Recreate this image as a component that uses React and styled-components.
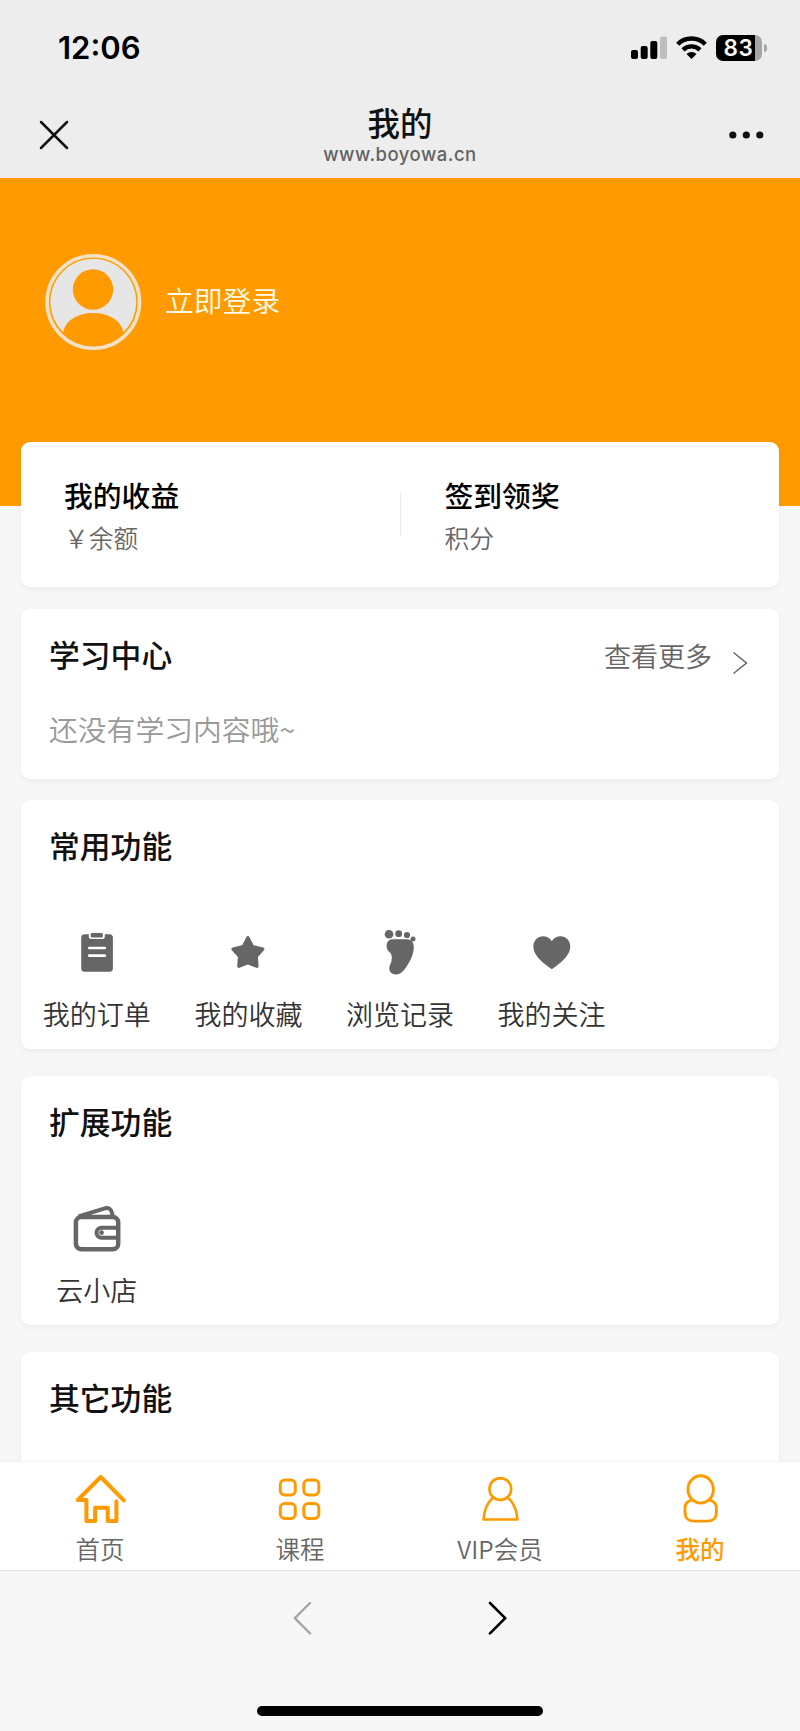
import React from 'react';
import styled, { createGlobalStyle } from 'styled-components';

const GlobalStyle = createGlobalStyle`
* {
  box-sizing: border-box;
}

body {
  margin: 0;
  background: #f7f7f7;
  font-family: "Noto Sans CJK SC", sans-serif;
}
`

const Phone = styled.div`
display: flex;
flex-direction: column;
width: 800px;
height: 1731px;
overflow: hidden;
background: #f7f7f7;
`

const StatusBar = styled.div`
display: flex;
justify-content: space-between;
height: 96px;
padding: 35px 33px 0 58px;
background: #ededed;
`

const Time = styled.span`
font-family: Inter, sans-serif;
font-size: 31px;
font-weight: 600;
line-height: 26px;
color: #000;
`

const StatusIcons = styled.div`
display: flex;
align-items: flex-start;
gap: 9px;
height: 26px;
`

const Battery = styled.div`
display: flex;
align-items: center;
gap: 2px;
`

const BatteryBody = styled.div`
width: 46px;
height: 26px;
border-radius: 7px;
padding-left: 7.5px;
background: linear-gradient(to right, #000 39px, #a5a5a5 39px);
font-family: Inter, sans-serif;
font-size: 22.5px;
font-weight: 600;
letter-spacing: 0.5px;
line-height: 26px;
color: #fff;
`

const BatteryTip = styled.div`
width: 3px;
height: 8px;
border-radius: 0 4px 4px 0;
background: #a5a5a5;
`

const NavBar = styled.header`
display: grid;
grid-template-columns: 200px 1fr 200px;
height: 82px;
background: #ededed;
`

const NavSide = styled.div`
display: flex;
justify-content: ${props => props.$right ? 'flex-end' : 'flex-start'};
padding: 24px 36px 0 39px;
`

const NavTitle = styled.div`
display: flex;
flex-direction: column;
align-items: center;

h1 {
  margin: 8px 0 0;
  font-size: 32.4px;
  font-weight: 500;
  line-height: 36px;
  color: #111;
}

p {
  margin: 2px 0 0;
  font-family: Inter, sans-serif;
  font-size: 18.5px;
  font-weight: 500;
  line-height: 24px;
  letter-spacing: 0.5px;
  color: #636363;
}
`

const Content = styled.main`
flex: 1;
min-height: 0;
overflow: hidden;
`

const Banner = styled.section`
display: flex;
height: 328px;
padding: 76px 45px 0;
background: #ff9b00;
`

const Login = styled.span`
margin-left: 23px;
font-size: 28.8px;
line-height: 92px;
font-weight: 350;
color: #fffbe8;
`

const Cards = styled.div`
display: flex;
flex-direction: column;
margin-top: -64px;
padding: 0 21px;
`

const Card = styled.section`
height: ${props => props.$height}px;
margin-bottom: ${props => props.$gap}px;
border-radius: 9px;
background: #fff;
box-shadow: 0 2px 6px rgba(0, 0, 0, 0.05);
`

const StatCard = styled(Card)`
position: relative;
display: grid;
grid-template-columns: 1fr 1px 1fr;
`

const Stat = styled.div`
padding: 33px 0 0 ${props => props.$left}px;

h3 {
  margin: 0;
  font-size: 28.8px;
  font-weight: 500;
  line-height: 40px;
  color: #000;
}

p {
  margin: 4px 0 0;
  font-size: 24.7px;
  font-weight: 350;
  line-height: 36px;
  color: #666;
}
`

const Divider = styled.div`
height: 43px;
margin-top: 51px;
background: #ececec;
`

const CardHead = styled.div`
display: flex;
justify-content: space-between;
padding: 0 31px 0 28px;

h2 {
  margin: 25px 0 0;
  font-size: 30.8px;
  font-weight: 500;
  line-height: 40px;
  color: #111;
}
`

const More = styled.div`
display: flex;
gap: 20px;
padding-top: 27px;
font-size: 27px;
font-weight: 350;
line-height: 40px;
color: #666;

svg {
  margin-top: 15px;
}
`

const Empty = styled.p`
margin: 33px 0 0 28px;
font-size: 28.8px;
font-weight: 350;
line-height: 40px;
color: #999;
`

const Features = styled.div`
display: grid;
grid-template-columns: repeat(5, 1fr);
padding-top: 63px;
`

const Feature = styled.div`
display: flex;
flex-direction: column;
align-items: center;
color: #666;

span {
  margin-top: 18px;
  font-size: 27px;
  font-weight: 350;
  line-height: 40px;
  color: #333;
}
`

const TabBar = styled.nav`
display: grid;
grid-template-columns: repeat(4, 1fr);
height: 109px;
background: #fff;
border-bottom: 1px solid #e0e0e0;
box-shadow: 0 -1px 2px rgba(0, 0, 0, 0.04);
z-index: 1;
`

const Tab = styled.div`
display: flex;
flex-direction: column;
align-items: center;
padding-top: 12px;
font-size: 24.5px;
line-height: 36px;
font-weight: ${props => props.$active ? 500 : 350};
color: ${props => props.$active ? '#ff9b00' : '#666'};

svg {
  margin-bottom: 5px;
  color: #ff9b00;
}
`

const ToolBar = styled.footer`
display: flex;
flex-direction: column;
align-items: center;
justify-content: space-between;
height: 160px;
padding: 30px 0 15px;
background: #f7f7f7;
`

const Arrows = styled.div`
display: flex;
gap: 176px;
`

const HomeBar = styled.div`
width: 286px;
height: 10px;
border-radius: 5px;
background: #000;
`

const SignalIcon = () => (
  <svg width="36" height="26" viewBox="0 0 36 26">
    <rect x="0" y="15" width="7" height="9" rx="2" />
    <rect x="9.7" y="11" width="7" height="13" rx="2" />
    <rect x="19.3" y="6" width="7" height="18" rx="2" />
    <rect x="29" y="1.5" width="7" height="22.5" rx="2" fill="#bdbdbd" />
  </svg>
)

const WifiIcon = () => (
  <svg width="31" height="26" viewBox="0 0 31 26">
    <g fill="none" stroke="#000" strokeWidth="4.4">
      <path d="M1.7 9.2a19.6 19.6 0 0 1 27.6 0" />
      <path d="M7 14.9a12 12 0 0 1 17 0" />
    </g>
    <path d="M15.5 24l-5-4.9a7 7 0 0 1 10 0z" />
  </svg>
)

const CloseIcon = () => (
  <svg width="30" height="30" viewBox="0 0 30 30" stroke="#111" strokeWidth="2.5" strokeLinecap="round">
    <path d="M2 2l26 26M28 2L2 28" />
  </svg>
)

const DotsIcon = () => (
  <svg width="35" height="30" viewBox="0 0 35 30" fill="#111">
    <circle cx="3.8" cy="15" r="3.6" />
    <circle cx="17.3" cy="15" r="3.6" />
    <circle cx="30.8" cy="15" r="3.6" />
  </svg>
)

const Avatar = () => (
  <svg width="97" height="97" viewBox="0 0 97 97">
    <circle cx="48.3" cy="48" r="46.2" fill="none" stroke="#f3e2ca" strokeWidth="3.6" />
    <path
      fill="#e6e6e6"
      d="M18.2 78.4a43 43 0 1 1 60.2 0C76.5 67 64.5 59 48.3 59S20.1 67 18.2 78.4z"
    />
    <circle cx="48" cy="35.5" r="20.2" fill="#ff9b00" />
  </svg>
)

const OrderIcon = () => (
  <svg width="48" height="48" viewBox="0 0 48 48" fill="currentColor">
    <rect x="8.2" y="6.3" width="31.7" height="37.5" rx="3.5" />
    <path d="M15.8 6v2.5a2.5 2.5 0 0 0 2.5 2.5h11a2.5 2.5 0 0 0 2.5-2.5V6z" fill="#fff" />
    <rect x="17.8" y="5" width="12" height="4.5" rx="1.3" />
    <path d="M16.3 20h15.5M16.3 27.7h15.5" stroke="#fff" strokeWidth="2.7" strokeLinecap="round" />
  </svg>
)

const StarIcon = () => (
  <svg width="48" height="48" viewBox="0 0 48 48" fill="currentColor">
    <path
      d="M23.9 9.8l4.6 8.9 10.2 2.5-6.5 7.2.7 9.8-9-3.6-9 3.6.7-9.8-6.5-7.2 10.2-2.5z"
      stroke="currentColor"
      strokeWidth="3.4"
      strokeLinejoin="round"
    />
  </svg>
)

const FootIcon = () => (
  <svg width="48" height="48" viewBox="0 0 48 48" fill="currentColor">
    <circle cx="13" cy="6.3" r="4.3" />
    <circle cx="22.7" cy="5.7" r="3.4" />
    <circle cx="31" cy="7" r="3.1" />
    <circle cx="37" cy="11" r="2.5" />
    <path d="M17 11.3h14c5 0 7 3.5 6.8 9-.3 5.500-2.500 10.500-5.500 15.500-3.300 5.500-6.800 10.700-12.300 10.700-4.500 0-7-3.200-6.700-7 .3-3 2.200-4.500 2.400-8 .2-3 .1-5.300-1.700-7-2.200-1.700-3.500-3.500-3.400-6.500.1-4 2.400-6.700 6.400-6.700z" />
  </svg>
)

const HeartIcon = () => (
  <svg width="48" height="48" viewBox="0 0 48 48" fill="currentColor">
    <path d="M23.8 41.3C17 36 5.3 28.5 5.3 18.5 5.3 12.5 9.6 8.2 15 8.2c3.6 0 6.8 1.8 8.8 5 2-3.2 5.2-5 8.8-5 5.4 0 9.7 4.3 9.7 10.3C42.3 28.5 30.6 36 23.8 41.3z" />
  </svg>
)

const WalletIcon = () => (
  <svg width="48" height="48" viewBox="0 0 48 48" fill="none" stroke="currentColor" strokeWidth="4.5">
    <rect x="2.9" y="13" width="42.3" height="32.2" rx="5.5" />
    <path d="M5.5 12.5L31 4.600c4.500-1.400 7.300.2 8 4.300l.8 3.700" strokeWidth="4" />
    <path d="M45 23.8H28.5a5 5 0 0 0 0 10H45" strokeWidth="4" />
    <circle cx="28.5" cy="28.7" r="2.4" fill="currentColor" stroke="none" />
  </svg>
)

const HomeIcon = () => (
  <svg width="52" height="52" viewBox="0 0 52 52" fill="none" stroke="currentColor" strokeWidth="4" strokeLinecap="round" strokeLinejoin="round">
    <path d="M49.8 26.3L26.7 3 3.8 26H12.4v21h8.7V33.8h12.6V47h8.7V27.5" />
  </svg>
)

const CourseIcon = () => (
  <svg width="52" height="52" viewBox="0 0 52 52" fill="none" stroke="currentColor" strokeWidth="3">
    <rect x="6.3" y="6" width="15" height="15" rx="4.5" />
    <rect x="29.8" y="6" width="15" height="15" rx="4.5" />
    <rect x="6.3" y="29.5" width="15" height="15" rx="4.5" />
    <rect x="29.8" y="29.5" width="15" height="15" rx="4.5" />
  </svg>
)

const VipIcon = () => (
  <svg width="52" height="52" viewBox="0 0 52 52" fill="none" stroke="currentColor" strokeWidth="2.6" strokeLinejoin="round">
    <circle cx="26.3" cy="15" r="10.9" />
    <path d="M18.8 23.7C13.5 28.5 10.2 36 9.5 45.5h34C42.8 36 39.5 28.5 34 23.7" />
  </svg>
)

const MineIcon = () => (
  <svg width="52" height="52" viewBox="0 0 52 52" fill="none" stroke="currentColor" strokeWidth="2.9">
    <ellipse cx="26.7" cy="15.4" rx="12.7" ry="13.7" />
    <path d="M17.2 26.2c-3.900 1.300-6.200 4-6.200 7.600v4.600c0 5.400 3.300 8.700 8.700 8.700h14c5.400 0 8.700-3.300 8.700-8.700v-4.600c0-3.600-2.300-6.300-6.200-7.600" />
  </svg>
)

const commonFeatures = [
  { id: 1, name: '我的订单', icon: <OrderIcon /> },
  { id: 2, name: '我的收藏', icon: <StarIcon /> },
  { id: 3, name: '浏览记录', icon: <FootIcon /> },
  { id: 4, name: '我的关注', icon: <HeartIcon /> },
]

const extraFeatures = [
  { id: 1, name: '云小店', icon: <WalletIcon /> },
]

const tabs = [
  { id: 1, name: '首页', icon: <HomeIcon /> },
  { id: 2, name: '课程', icon: <CourseIcon /> },
  { id: 3, name: 'VIP会员', icon: <VipIcon /> },
  { id: 4, name: '我的', icon: <MineIcon />, active: true },
]

const FeatureCard = ({ title, items, gap }) => (
  <Card $height={249} $gap={gap}>
    <CardHead><h2>{title}</h2></CardHead>
    <Features>
      {items.map((item) =>
        (<Feature key={item.id}>
          {item.icon}
          <span>{item.name}</span>
        </Feature>
        ))}
    </Features>
  </Card>
)

const App = () => {
  return (
    <>
      <GlobalStyle />
      <Phone>
        <StatusBar>
          <Time>12:06</Time>
          <StatusIcons>
            <SignalIcon />
            <WifiIcon />
            <Battery>
              <BatteryBody>83</BatteryBody>
              <BatteryTip />
            </Battery>
          </StatusIcons>
        </StatusBar>

        <NavBar>
          <NavSide><CloseIcon /></NavSide>
          <NavTitle>
            <h1>我的</h1>
            <p>www.boyowa.cn</p>
          </NavTitle>
          <NavSide $right><DotsIcon /></NavSide>
        </NavBar>

        <Content>
          <Banner>
            <Avatar />
            <Login>立即登录</Login>
          </Banner>

          <Cards>
            <StatCard $height={145} $gap={22}>
              <Stat $left={43}>
                <h3>我的收益</h3>
                <p>￥余额</p>
              </Stat>
              <Divider />
              <Stat $left={44}>
                <h3>签到领奖</h3>
                <p>积分</p>
              </Stat>
            </StatCard>

            <Card $height={170} $gap={21}>
              <CardHead>
                <h2>学习中心</h2>
                <More>
                  查看更多
                  <svg width="16" height="24" viewBox="0 0 16 24" fill="none" stroke="#666" strokeWidth="1.5">
                    <path d="M1.5 1.5L14.5 12l-13 10.5" />
                  </svg>
                </More>
              </CardHead>
              <Empty>还没有学习内容哦~</Empty>
            </Card>

            <FeatureCard title="常用功能" items={commonFeatures} gap={27} />
            <FeatureCard title="扩展功能" items={extraFeatures} gap={27} />
            <FeatureCard title="其它功能" items={[]} gap={0} />
          </Cards>
        </Content>

        <TabBar>
          {tabs.map((tab) =>
            (<Tab key={tab.id} $active={tab.active}>
              {tab.icon}
              {tab.name}
            </Tab>
            ))}
        </TabBar>

        <ToolBar>
          <Arrows>
            <svg width="20" height="34" viewBox="0 0 20 34" fill="none" stroke="#a6a6a6" strokeWidth="2.4" strokeLinecap="round" strokeLinejoin="round">
              <path d="M18 2L2.8 17.2 18 32.4" />
            </svg>
            <svg width="20" height="34" viewBox="0 0 20 34" fill="none" stroke="#000" strokeWidth="2.6" strokeLinecap="round" strokeLinejoin="round">
              <path d="M2 2l15.2 15.2L2 32.4" />
            </svg>
          </Arrows>
          <HomeBar />
        </ToolBar>
      </Phone>
    </>
  )
}

export default App;
